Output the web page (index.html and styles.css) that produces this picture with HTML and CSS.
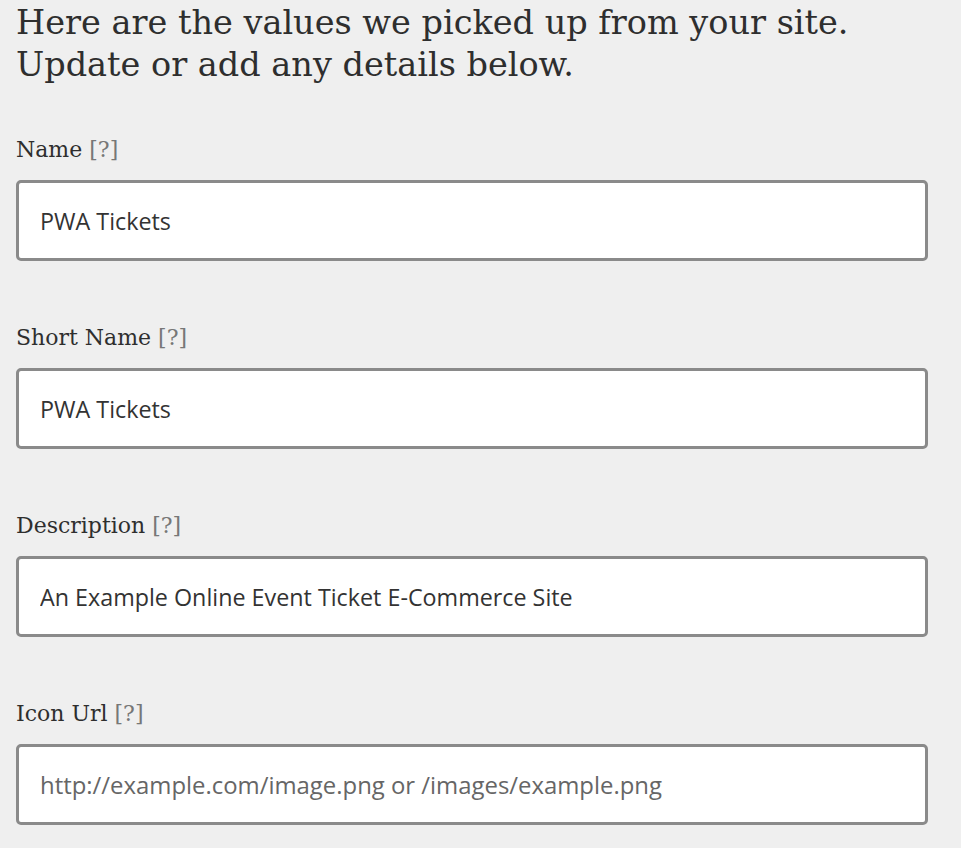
FILE: index.html
```html
<!DOCTYPE html>
<html>
<head>
<meta charset="utf-8">
<link rel="stylesheet" href="styles.css">
</head>
<body>
<div class="page">
  <h1 class="title">Here are the values we picked up from your site.<br>Update or add any details below.</h1>
  <form class="form">
    <div class="field">
      <label class="label">Name <span class="hint">[?]</span></label>
      <input class="input" type="text" value="PWA Tickets">
    </div>
    <div class="field">
      <label class="label">Short Name <span class="hint">[?]</span></label>
      <input class="input" type="text" value="PWA Tickets">
    </div>
    <div class="field">
      <label class="label">Description <span class="hint">[?]</span></label>
      <input class="input" type="text" value="An Example Online Event Ticket E-Commerce Site">
    </div>
    <div class="field">
      <label class="label">Icon Url <span class="hint">[?]</span></label>
      <input class="input" type="text" placeholder="http://example.com/image.png or /images/example.png">
    </div>
  </form>
</div>
</body>
</html>
```
FILE: styles.css
```css
html, body {
  margin: 0;
  padding: 0;
  background: #efefef;
}
.page {
  padding: 0 33px 0 16px;
  font-family: "DejaVu Serif", serif;
  color: #333;
}
.title {
  margin: 0;
  padding-top: 2px;
  font-size: 33.5px;
  line-height: 42px;
  font-weight: normal;
  color: #2e2e2e;
}
.form {
  display: flex;
  flex-direction: column;
  gap: 62px;
  margin-top: 49px;
}
.field {
  display: flex;
  flex-direction: column;
  gap: 15px;
}
.label {
  font-size: 22px;
  line-height: 30px;
  color: #2e2e2e;
}
.hint {
  color: #777;
}
.input {
  box-sizing: border-box;
  width: 100%;
  height: 81px;
  margin: 0;
  padding: 0 21px;
  border: 3px solid #8a8a8a;
  border-radius: 5px;
  background: #fff;
  font-family: "Open Sans", sans-serif;
  font-size: 23.3px;
  color: #333;
  outline: none;
}
.input::placeholder {
  color: #666;
  opacity: 1;
  font-size: 23.9px;
}
```
